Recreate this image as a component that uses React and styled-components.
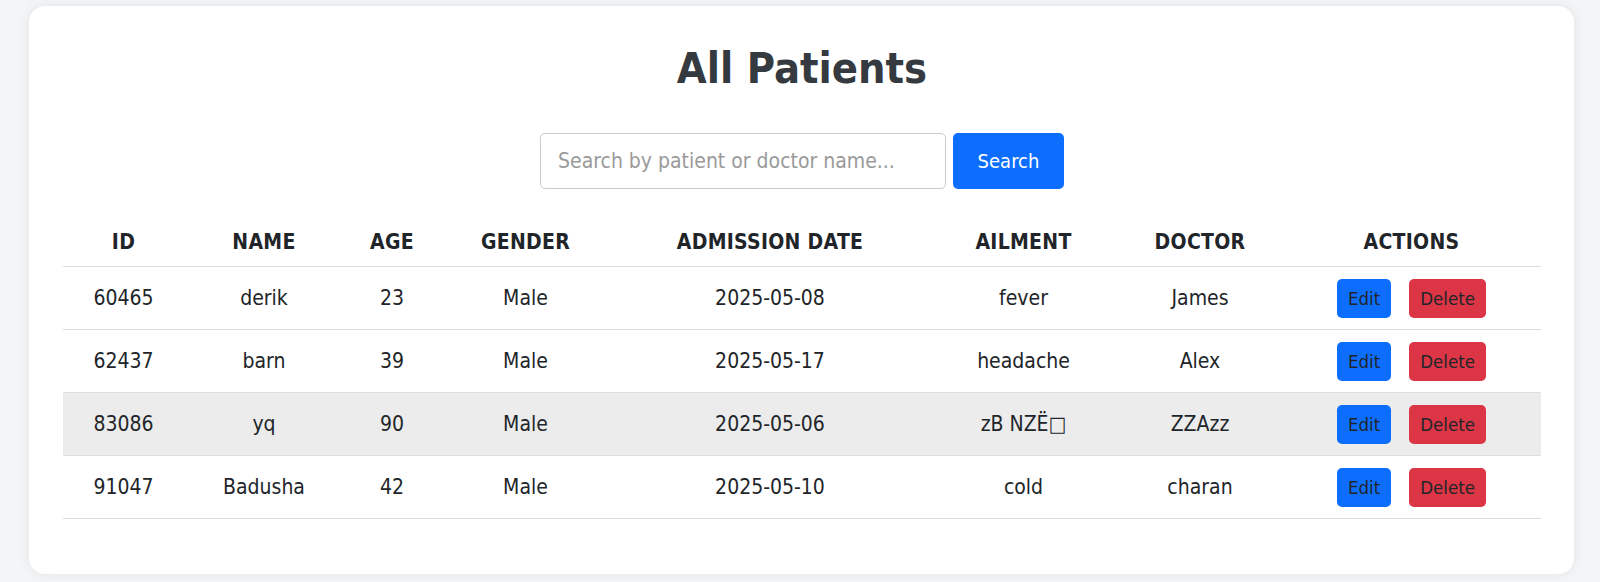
import React from 'react';
import styled, { createGlobalStyle } from 'styled-components';

const GlobalStyle = createGlobalStyle`
  body {
    margin: 0;
    background-color: #f4f5f7;
    font-family: "DejaVu Sans Condensed", "DejaVu Sans", sans-serif;
    color: #212529;
  }
`;

const Page = styled.div`
  padding: 6px 26px 12px 29px;
`;

const Card = styled.div`
  background-color: #ffffff;
  border-radius: 16px;
  box-shadow: 0 0 12px rgba(0, 0, 0, 0.08);
  padding: 37px 33px 55px 34px;
`;

const Title = styled.h1`
  margin: 0;
  text-align: center;
  font-size: 43px;
  line-height: 50px;
  font-weight: bold;
  color: #343a40;
`;

const SearchBar = styled.form`
  margin-top: 40px;
  display: flex;
  justify-content: center;
  gap: 7px;
`;

const SearchInput = styled.input`
  width: 406px;
  height: 56px;
  box-sizing: border-box;
  padding: 0 17px;
  border: 1px solid #cccccc;
  border-radius: 5px;
  font-family: inherit;
  font-size: 21px;
  color: #212529;
  outline: none;
  &::placeholder {
    color: #9a9a9a;
  }
`;

const SearchButton = styled.button`
  width: 111px;
  height: 56px;
  border: none;
  border-radius: 5px;
  background-color: #0d6efd;
  color: #ffffff;
  font-family: inherit;
  font-size: 20px;
  cursor: pointer;
`;

const Table = styled.table`
  width: 100%;
  margin-top: 28px;
  border-collapse: collapse;
  table-layout: fixed;
`;

const Col = styled.col`
  width: ${(p) => p.$w}px;
`;

const Th = styled.th`
  height: 49px;
  padding: 0 8px;
  border-bottom: 1px solid #dedede;
  font-size: 21px;
  font-weight: bold;
  letter-spacing: 0.3px;
  text-transform: uppercase;
  text-align: center;
  color: #212529;
`;

const Row = styled.tr`
  background-color: ${(p) => (p.$hover ? '#ececec' : 'transparent')};
`;

const Td = styled.td`
  height: 62px;
  padding: 0 8px;
  border-bottom: 1px solid #dedede;
  font-size: 21px;
  text-align: center;
  color: #212529;
`;

const ActionButton = styled.button`
  height: 39px;
  padding: 0 11px;
  margin: 0 9px;
  border: none;
  border-radius: 5px;
  background-color: ${(p) => (p.$danger ? '#dc3545' : '#0d6efd')};
  color: #212529;
  font-family: inherit;
  font-size: 18.5px;
  vertical-align: middle;
  cursor: pointer;
`;

const columns = [
  { label: 'ID', w: 121 },
  { label: 'Name', w: 160 },
  { label: 'Age', w: 96 },
  { label: 'Gender', w: 171 },
  { label: 'Admission Date', w: 318 },
  { label: 'Ailment', w: 189 },
  { label: 'Doctor', w: 164 },
  { label: 'Actions', w: 259 },
];

const patients = [
  { id: 60465, name: 'derik', age: 23, gender: 'Male', date: '2025-05-08', ailment: 'fever', doctor: 'James' },
  { id: 62437, name: 'barn', age: 39, gender: 'Male', date: '2025-05-17', ailment: 'headache', doctor: 'Alex' },
  { id: 83086, name: 'yq', age: 90, gender: 'Male', date: '2025-05-06', ailment: 'zB NZË\u25A1', doctor: 'ZZAzz', hover: true },
  { id: 91047, name: 'Badusha', age: 42, gender: 'Male', date: '2025-05-10', ailment: 'cold', doctor: 'charan' },
];

export default function App() {
  return (
    <Page>
      <GlobalStyle />
      <Card>
        <Title>All Patients</Title>
        <SearchBar onSubmit={(e) => e.preventDefault()}>
          <SearchInput placeholder="Search by patient or doctor name..." />
          <SearchButton type="submit">Search</SearchButton>
        </SearchBar>
        <Table>
          <colgroup>
            {columns.map((c) => (
              <Col key={c.label} $w={c.w} />
            ))}
          </colgroup>
          <thead>
            <tr>
              {columns.map((c) => (
                <Th key={c.label}>{c.label}</Th>
              ))}
            </tr>
          </thead>
          <tbody>
            {patients.map((p) => (
              <Row key={p.id} $hover={p.hover}>
                <Td>{p.id}</Td>
                <Td>{p.name}</Td>
                <Td>{p.age}</Td>
                <Td>{p.gender}</Td>
                <Td>{p.date}</Td>
                <Td>{p.ailment}</Td>
                <Td>{p.doctor}</Td>
                <Td>
                  <ActionButton>Edit</ActionButton>
                  <ActionButton $danger>Delete</ActionButton>
                </Td>
              </Row>
            ))}
          </tbody>
        </Table>
      </Card>
    </Page>
  );
}
